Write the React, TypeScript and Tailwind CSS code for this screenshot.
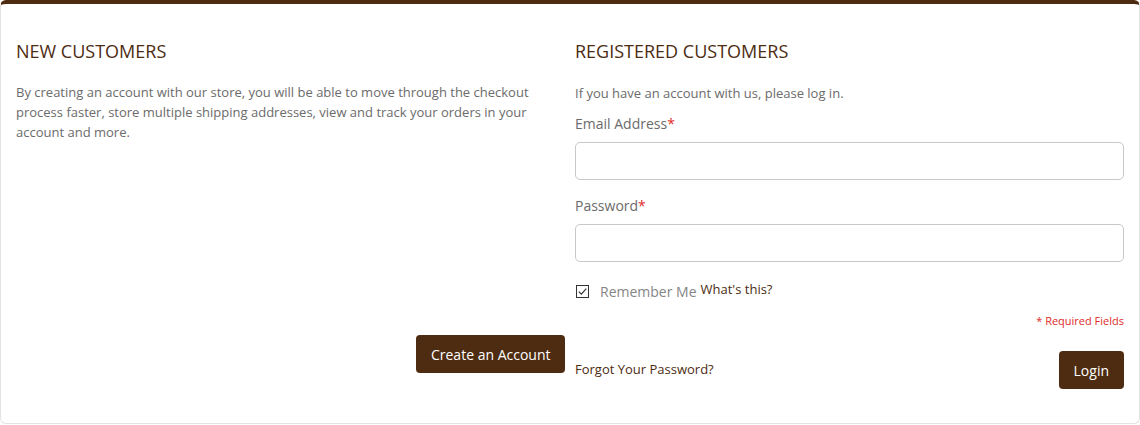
import React from 'react';

const font = { fontFamily: '"Open Sans", "Liberation Sans", sans-serif' };

const CheckIcon: React.FC = () => (
  <svg width="13" height="13" viewBox="0 0 13 13" className="shrink-0">
    <rect x="0.5" y="0.5" width="12" height="12" fill="#fff" stroke="#333" strokeWidth="1" />
    <path d="M2.8 6.6 L5.3 9.1 L10.3 3.6" fill="none" stroke="#333" strokeWidth="1.2" />
  </svg>
);

export default function App() {
  return (
    <div className="w-[1140px] h-[425px] bg-white" style={font}>
      <div className="h-[424px] bg-white border border-[#e3e3e3] border-t-4 border-t-[#4d2c12] rounded-[6px] pt-[35px] px-[15px] pb-[34px] flex gap-[10px]">
        {/* new customers */}
        <div className="flex-1 flex flex-col">
          <h2 className="text-[18px] leading-[24px] text-[#4d2c12] uppercase">New Customers</h2>
          <p className="mt-[19px] text-[13px] leading-[20px] text-[#6b6b6b] pr-[20px]">
            By creating an account with our store, you will be able to move through the checkout
            process faster, store multiple shipping addresses, view and track your orders in your
            account and more.
          </p>
          <button className="mt-auto mb-[16px] self-end h-[38px] px-[14.5px] rounded-[4px] bg-[#4d2c11] text-white text-[14px]">
            Create an Account
          </button>
        </div>

        {/* registered customers */}
        <div className="flex-1 flex flex-col">
          <h2 className="text-[18px] leading-[24px] text-[#4d2c12] uppercase">Registered Customers</h2>
          <p className="mt-[20px] text-[13px] leading-[20px] text-[#6b6b6b]">
            If you have an account with us, please log in.
          </p>

          <label className="mt-[11px] text-[14px] leading-[20px] text-[#6b6b6b]">
            Email Address<span className="text-[#e02b27]">*</span>
          </label>
          <input className="mt-[8px] h-[38px] w-full rounded-[5px] border border-[#c8c8c8] px-3 outline-none" />

          <label className="mt-[16px] text-[14px] leading-[20px] text-[#6b6b6b]">
            Password<span className="text-[#e02b27]">*</span>
          </label>
          <input type="password" className="mt-[8px] h-[38px] w-full rounded-[5px] border border-[#c8c8c8] px-3 outline-none" />

          <div className="mt-[19px] flex items-center h-[20px] pl-[1px]">
            <CheckIcon />
            <span className="ml-[11px] text-[14px] text-[#858585]">Remember Me</span>
            <a className="ml-[4px] text-[13px] text-[#4d2c12] -mt-[3px]">What's this?</a>
          </div>

          <div className="mt-[12px] text-right text-[11px] leading-[15px] text-[#e02b27]">* Required Fields</div>

          <div className="mt-[23px] flex items-center justify-between">
            <a className="text-[13px] text-[#4d2c12]">Forgot Your Password?</a>
            <button className="h-[38px] px-[15px] rounded-[4px] bg-[#4d2c11] text-white text-[14px]">Login</button>
          </div>
        </div>
      </div>
    </div>
  );
}
